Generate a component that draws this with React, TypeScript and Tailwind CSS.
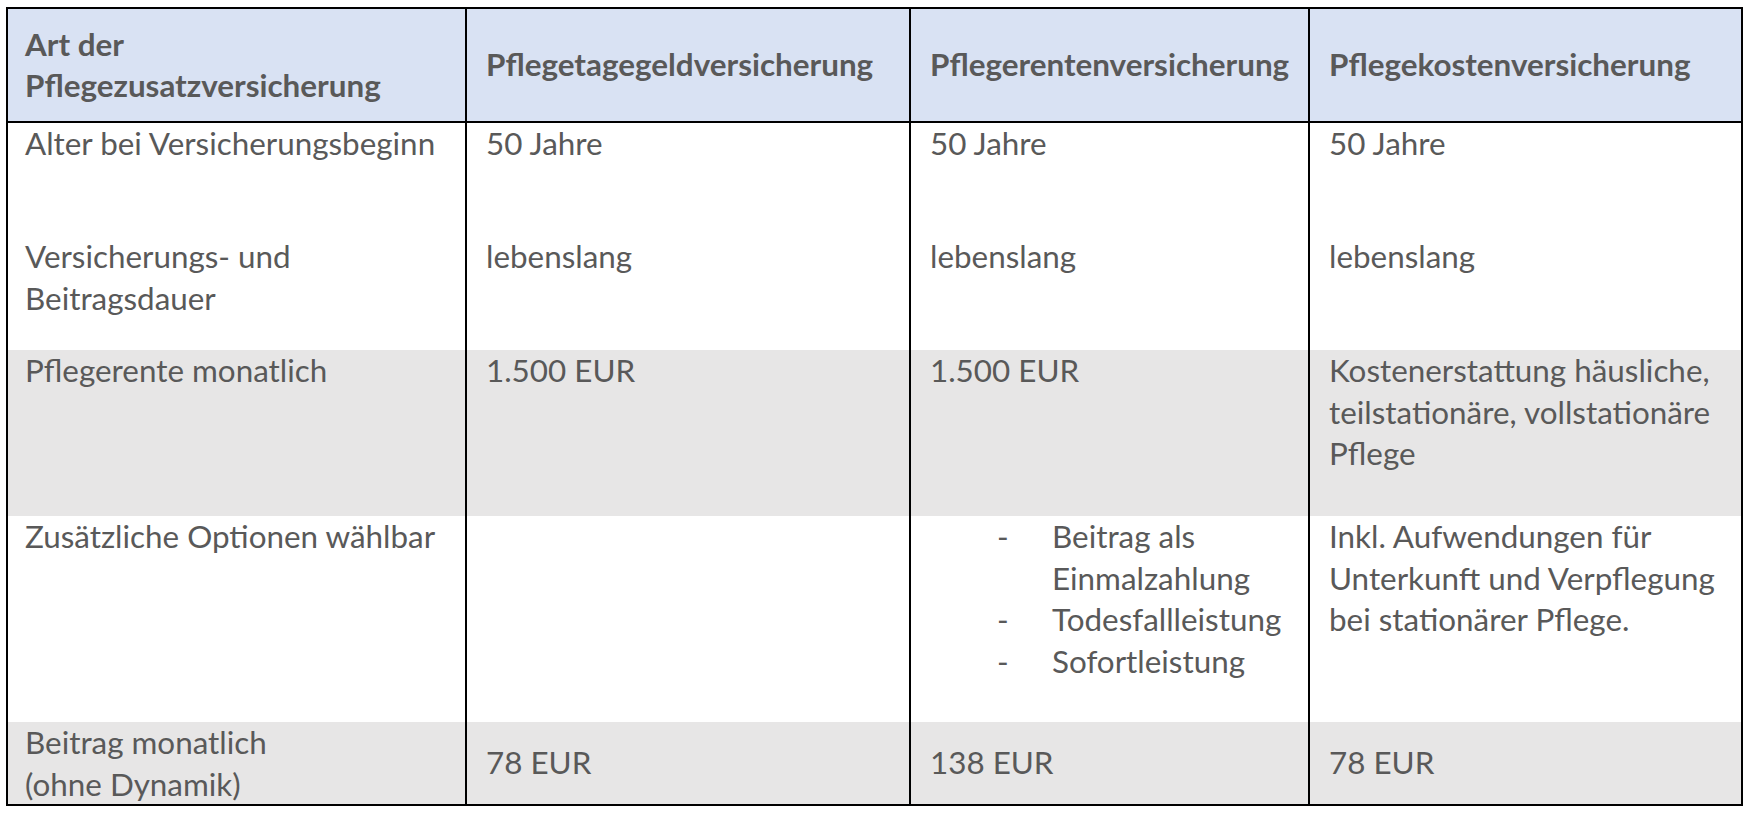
import React from "react";

const font = { fontFamily: "Lato, 'Open Sans', sans-serif" };

function Cell({
  children,
  first,
  bg,
  header,
  center,
}: {
  children?: React.ReactNode;
  first?: boolean;
  bg?: string;
  header?: boolean;
  center?: boolean;
}) {
  return (
    <div
      className={[
        first ? "" : "border-l-2 border-black",
        header ? "border-b-2 border-black font-bold" : "",
        center ? "flex flex-col justify-center" : "",
        bg ?? "",
        first ? "pl-[17px]" : "pl-[19px]",
        "pr-2 text-[#595959]",
      ].join(" ")}
    >
      <div>{children}</div>
    </div>
  );
}

export default function App() {
  const blue = "bg-[#D9E2F3]";
  const grey = "bg-[#E7E6E6]";
  return (
    <div className="min-h-[814px] w-[1750px] bg-white pl-[6px] pt-[7px]" style={font}>
      <div className="grid w-[1737px] grid-cols-[457px_444px_399px_433px] grid-rows-[114px_111px_116px_166px_206px_82px] border-2 border-black text-[31.4px] leading-[41.5px]">
        {/* header */}
        <Cell first header center bg={blue}>
          Art der
          <br />
          Pflegezusatzversicherung
        </Cell>
        <Cell header center bg={blue}>
          Pflegetagegeldversicherung
        </Cell>
        <Cell header center bg={blue}>
          Pflegerentenversicherung
        </Cell>
        <Cell header center bg={blue}>
          Pflegekostenversicherung
        </Cell>

        {/* row 1 */}
        <Cell first>Alter bei Versicherungsbeginn</Cell>
        <Cell>50 Jahre</Cell>
        <Cell>50 Jahre</Cell>
        <Cell>50 Jahre</Cell>

        {/* row 2 */}
        <Cell first>
          <div className="pt-[2px]">
            Versicherungs- und
            <br />
            Beitragsdauer
          </div>
        </Cell>
        <Cell>
          <div className="pt-[2px]">lebenslang</div>
        </Cell>
        <Cell>
          <div className="pt-[2px]">lebenslang</div>
        </Cell>
        <Cell>
          <div className="pt-[2px]">lebenslang</div>
        </Cell>

        {/* row 3 */}
        <Cell first bg={grey}>
          Pflegerente monatlich
        </Cell>
        <Cell bg={grey}>1.500 EUR</Cell>
        <Cell bg={grey}>1.500 EUR</Cell>
        <Cell bg={grey}>
          Kostenerstattung häusliche,
          <br />
          teilstationäre, vollstationäre
          <br />
          Pflege
        </Cell>

        {/* row 4 */}
        <Cell first>Zusätzliche Optionen wählbar</Cell>
        <Cell />
        <Cell>
          <ul className="pl-[67px]">
            {[["Beitrag als", "Einmalzahlung"], ["Todesfallleistung"], ["Sofortleistung"]].map((item, i) => (
              <li key={i} className="flex">
                <span className="w-[55px] shrink-0">-</span>
                <span>
                  {item.map((l, j) => (
                    <React.Fragment key={j}>
                      {j > 0 && <br />}
                      {l}
                    </React.Fragment>
                  ))}
                </span>
              </li>
            ))}
          </ul>
        </Cell>
        <Cell>
          Inkl. Aufwendungen für
          <br />
          Unterkunft und Verpflegung
          <br />
          bei stationärer Pflege.
        </Cell>

        {/* row 5 */}
        <Cell first bg={grey}>
          Beitrag monatlich
          <br />
          (ohne Dynamik)
        </Cell>
        <Cell bg={grey} center>
          78 EUR
        </Cell>
        <Cell bg={grey} center>
          138 EUR
        </Cell>
        <Cell bg={grey} center>
          78 EUR
        </Cell>
      </div>
    </div>
  );
}
